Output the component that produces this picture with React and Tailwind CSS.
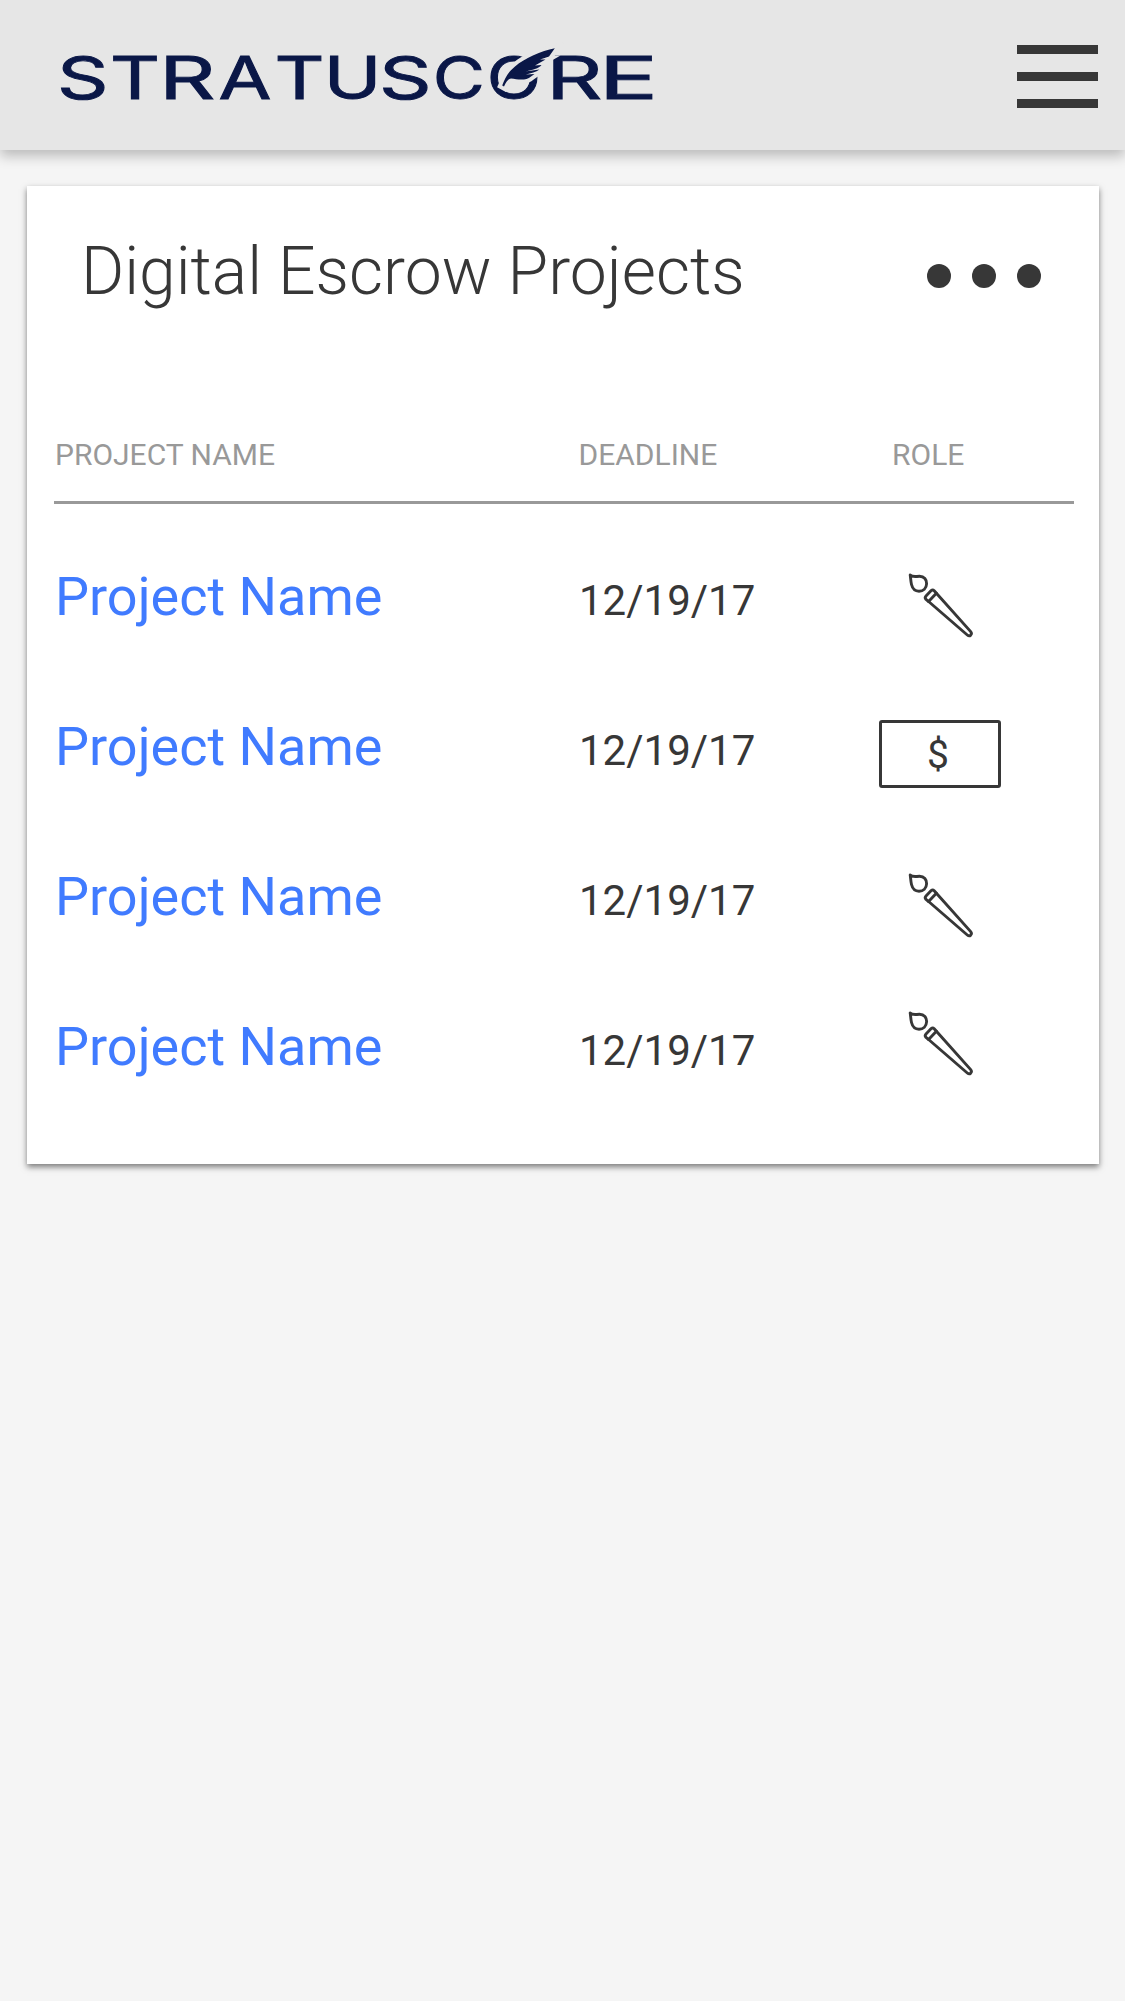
import React from "react";

// Wordmark glyphs: x = left edge of the ink, w = ink width, b = left bearing, n = natural ink width
const GLYPHS = [
  { c: "S", x: 60.5, w: 46, b: 2.6, n: 33.8 },
  { c: "T", x: 113, w: 46, b: 2.3, n: 35 },
  { c: "R", x: 166.5, w: 48, b: 4.9, n: 32.4 },
  { c: "A", x: 220.5, w: 52, b: 1.6, n: 40 },
  { c: "T", x: 277.5, w: 46, b: 2.3, n: 35 },
  { c: "U", x: 330, w: 46, b: 4.7, n: 35 },
  { c: "S", x: 382.5, w: 47, b: 2.6, n: 33.8 },
  { c: "C", x: 436.5, w: 46, b: 3.1, n: 38 },
  { c: "O", x: 490.5, w: 48, b: 3.1, n: 39.8 },
  { c: "R", x: 553.5, w: 48, b: 4.9, n: 32.4 },
  { c: "E", x: 607, w: 46.5, b: 4.9, n: 27.8 },
];

const FEATHER =
  "M554.8 48.3C541 51 525 58 515 66.5C507 73 505 79 502.2 85.5L504 86.5C506 82 508 79 511 78.5C518 79.5 526 81 531 76.5L534.5 74L526 74.5C531 73 536 72.5 539.5 69.5L525 71.5C532 70 539 68.5 541.5 65L535 65.5L545.5 59.5L540 59.5L549 56.5Z";

function Logo() {
  return (
    <svg className="block" width="616" height="100" viewBox="54 25 616 100" role="img" aria-label="Stratuscore">
      <g
        fill="#0a1747"
        stroke="#0a1747"
        strokeWidth="0.9"
        fontFamily="Inter, sans-serif"
        fontSize="59"
        fontWeight="400"
      >
        {GLYPHS.map((g, i) => (
          <text key={i} x={-g.b} y="0" transform={`translate(${g.x} 99.2) scale(${g.w / g.n} 1)`}>
            {g.c}
          </text>
        ))}
      </g>
      <path d={FEATHER} fill="#e6e6e6" stroke="#e6e6e6" strokeWidth="8" />
      <path d={FEATHER} fill="#0a1747" />
    </svg>
  );
}

function Brush({ className }) {
  return (
    <svg
      className={className}
      width="72"
      height="72"
      viewBox="0 0 72 72"
      fill="none"
      stroke="#373737"
      strokeWidth="2.9"
      strokeLinejoin="round"
      strokeLinecap="round"
    >
      <path d="M5.2 5C7.5 7.5 11 6.3 14.5 6.3C19.2 6.3 21.8 9.8 21.6 13.8C21.400 18.3 18.3 21.2 14 21.2C10 21.2 7.5 18.5 6.5 14.5C5.700 11 5.7 8 5.2 5Z" />
      <path d="M26.2 20.6L21 26Q19.4 27.8 21 29.4L23.6 31.5L31.4 23.3L29.2 20.7Q27.7 19.2 26.2 20.6Z" />
      <path d="M23.6 31.5L62.3 65Q64.2 66.6 65.7 65.1Q67.2 63.5 65.7 61.6L31.4 23.3" />
    </svg>
  );
}

function Bill({ className }) {
  return (
    <div className={className}>
      <div className="h-[67.500px] w-[122px] rounded-[3px] border-3 border-[#373737] pl-[45px] text-[39px] leading-[64px]">
        $
      </div>
    </div>
  );
}

const ROWS = [
  { role: <Brush className="mt-12 ml-[26px]" /> },
  { role: <Bill className="mt-12" /> },
  { role: <Brush className="mt-12 ml-[26px]" /> },
  { role: <Brush className="mt-9 ml-[26px]" /> },
];

export default function App() {
  return (
    <div className="min-h-[2001px] w-[1125px] bg-[#f5f5f5] font-['Roboto',sans-serif] text-[#373737]">
      <header className="flex h-[150px] items-start justify-between bg-[#e6e6e6] pl-[54px] pr-[27px] shadow-[0_6px_12px_rgba(0,0,0,0.24)]">
        <div className="pt-[25px]">
          <Logo />
        </div>
        <button className="mt-[45px] flex w-[81px] flex-col gap-[18px]" aria-label="Menu">
          <span className="h-[9px] bg-[#373737]" />
          <span className="h-[9px] bg-[#373737]" />
          <span className="h-[9px] bg-[#373737]" />
        </button>
      </header>

      <main className="px-[27px] pt-9">
        <section className="h-[978px] w-[1072px] bg-white px-[27px] shadow-[0_3px_6px_rgba(0,0,0,0.5)]">
          <div className="flex h-[251px] items-start justify-between pt-[46px] pl-[27px] pr-[31px]">
            <h1 className="pt-px text-[66px] leading-[78px] font-light">Digital Escrow Projects</h1>
            <button className="mt-8 flex gap-[21px]" aria-label="More">
              <span className="size-6 rounded-full bg-[#373737]" />
              <span className="size-6 rounded-full bg-[#373737]" />
              <span className="size-6 rounded-full bg-[#373737]" />
            </button>
          </div>

          <div className="grid h-[67px] w-[1020px] grid-cols-[524px_301px_195px] border-b-3 border-[#999999] text-[30px] leading-9 text-[#999999]">
            <span className="pl-px">PROJECT NAME</span>
            <span className="pl-[0.5px]">DEADLINE</span>
            <span className="pl-[13px]">ROLE</span>
          </div>

          <div className="pt-[18px]">
            {ROWS.map((row, i) => (
              <div key={i} className="grid h-[150px] w-[1020px] grid-cols-[524px_301px_195px] items-start">
                <a className="pt-[43px] pl-px text-[54px] leading-[64px] text-[#407bff]">Project Name</a>
                <span className="pt-[54px] pl-px text-[42px] leading-[50px]">12/19/17</span>
                {row.role}
              </div>
            ))}
          </div>
        </section>
      </main>
    </div>
  );
}
